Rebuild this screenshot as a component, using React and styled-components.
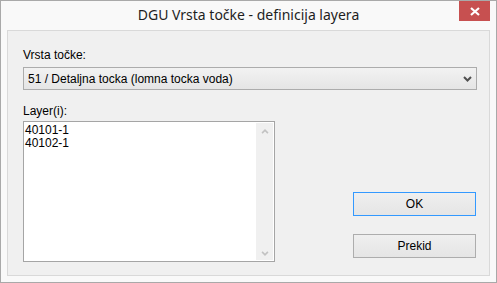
import React from "react";
import styled, { createGlobalStyle } from "styled-components";

const Global = createGlobalStyle`
  html, body { margin: 0; padding: 0; background: #ffffff; }
  * { box-sizing: border-box; }
`;

const Window = styled.div`
  width: 497px;
  height: 283px;
  display: flex;
  flex-direction: column;
  background: #f9f9f9;
  border: 1px solid #a9a9a9;
`;

const TitleBar = styled.div`
  height: 29px;
  display: grid;
  grid-template-columns: 1fr auto 1fr;
  align-items: start;
`;

const Title = styled.div`
  grid-column: 2;
  margin-top: 5px;
  font-family: "Segoe UI", "Noto Sans", "DejaVu Sans", sans-serif;
  font-size: 14px;
  line-height: 18px;
  color: #1e1e1e;
  white-space: nowrap;
`;

const CloseButton = styled.div`
  grid-column: 3;
  justify-self: end;
  width: 31px;
  height: 20px;
  margin-right: 6px;
  background: #c75050;
  display: flex;
  align-items: center;
  justify-content: center;
`;

const Client = styled.div`
  flex: 1;
  margin: 0 6px 6px 6px;
  border: 1px solid #d9d9d9;
  background: #f0f0f0;
  padding: 18px 12px 0 15px;
  display: flex;
  flex-direction: column;
  font-family: "Liberation Sans", Arial, sans-serif;
  font-size: 12px;
  line-height: 13px;
  color: #000;
`;

const FieldLabel = styled.div`
  margin-top: ${(p) => p.$top || 0}px;
`;

const Combo = styled.div`
  margin-top: 5px;
  height: 23px;
  border: 1px solid #acacac;
  background: linear-gradient(#f2f2f2, #e5e5e5);
  display: flex;
  align-items: center;
  justify-content: space-between;
  padding: 0 4px 0 4px;
`;

const ComboText = styled.span`
  padding-top: 1px;
`;

const Lower = styled.div`
  display: flex;
  justify-content: space-between;
  align-items: flex-end;
`;

const LayerColumn = styled.div`
  display: flex;
  flex-direction: column;
`;

const ListBox = styled.div`
  margin-top: 3px;
  width: 252px;
  height: 141px;
  border: 1px solid #a5a5a5;
  background: #ffffff;
  display: flex;
`;

const Items = styled.div`
  flex: 1;
  padding: 2px 0 0 1px;
`;

const Item = styled.div`
  height: 13px;
`;

const ScrollBar = styled.div`
  width: 17px;
  margin: 1px 1px 1px 0;
  background: #f0f0f0;
  display: flex;
  flex-direction: column;
  justify-content: space-between;
  align-items: center;
  padding: 6px 0 4px;
`;

const ButtonColumn = styled.div`
  display: flex;
  flex-direction: column;
  gap: 18px;
  margin: 0 1px 4px 0;
`;

const Button = styled.div`
  width: 123px;
  height: 24px;
  border: 1px solid ${(p) => (p.$focused ? "#3399ff" : "#adadad")};
  background: linear-gradient(#efefef, #e5e5e5);
  display: flex;
  align-items: center;
  justify-content: center;
`;

const Chevron = ({ up, color = "#505050", w = 9, h = 6 }) => (
  <svg width={w} height={h} viewBox="0 0 9 6">
    <polyline
      points={up ? "1,5 4.5,1.5 8,5" : "1,1 4.5,4.5 8,1"}
      fill="none"
      stroke={color}
      strokeWidth="2"
    />
  </svg>
);

export default function App() {
  return (
    <>
      <Global />
      <Window>
        <TitleBar>
          <Title>DGU Vrsta točke - definicija layera</Title>
          <CloseButton>
            <svg width="10" height="9" viewBox="0 0 10 9">
              <path d="M1 1 L9 8 M9 1 L1 8" stroke="#fff" strokeWidth="2.2" />
            </svg>
          </CloseButton>
        </TitleBar>
        <Client>
          <FieldLabel>Vrsta točke:</FieldLabel>
          <Combo>
            <ComboText>51 / Detaljna tocka (lomna tocka voda)</ComboText>
            <Chevron />
          </Combo>
          <Lower>
            <LayerColumn>
              <FieldLabel $top={15}>Layer(i):</FieldLabel>
              <ListBox>
                <Items>
                  <Item>40101-1</Item>
                  <Item>40102-1</Item>
                </Items>
                <ScrollBar>
                  <Chevron up color="#c2c2c2" w={8} h={5} />
                  <Chevron color="#c2c2c2" w={8} h={5} />
                </ScrollBar>
              </ListBox>
            </LayerColumn>
            <ButtonColumn>
              <Button $focused>OK</Button>
              <Button>Prekid</Button>
            </ButtonColumn>
          </Lower>
        </Client>
      </Window>
    </>
  );
}
